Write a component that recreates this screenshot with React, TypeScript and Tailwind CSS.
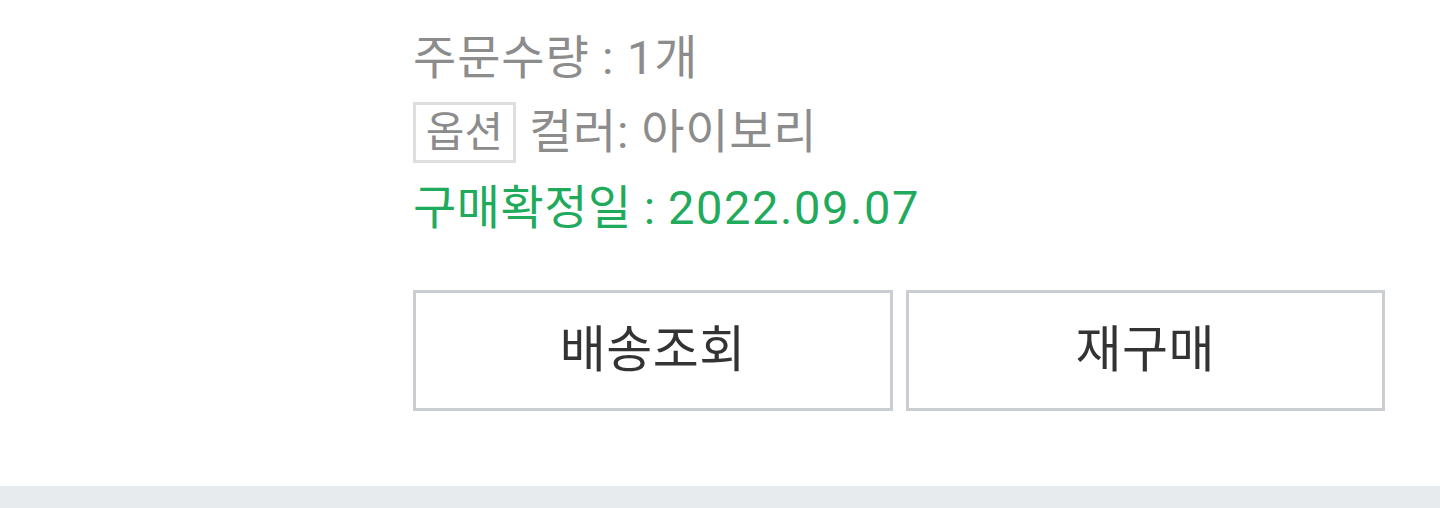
import React from 'react';

const font = { fontFamily: 'Roboto, "Noto Sans CJK KR", sans-serif' };

const OrderItem: React.FC = () => {
  return (
    <div className="w-[1440px] bg-white" style={font}>
      <div className="pl-[413px] pr-[55px] pt-[20px] pb-[75px]">
        <p className="text-[47px] leading-[75px] text-[#8c8c8c] tracking-[0.9px]">주문수량 : 1개</p>
        <div className="flex items-center h-[75px] text-[47px] text-[#8c8c8c]">
          <span className="flex items-center justify-center w-[103px] h-[61px] border-[3px] border-[#dedede] text-[42px] mr-[13px]">
            옵션
          </span>
          <span className="tracking-[0.7px]">컬러: 아이보리</span>
        </div>
        <p className="text-[47px] leading-[75px] text-[#1faa5c] tracking-[0.5px]">
          구매확정일 : <span className="tracking-[1.6px]">2022.09.07</span>
        </p>
        <div className="flex gap-[13px] mt-[45px]">
          <button className="flex-1 h-[121px] border-[3px] border-[#cacdd2] bg-white text-[50px] text-[#333333] tracking-[0.5px]">
            배송조회
          </button>
          <button className="flex-1 h-[121px] border-[3px] border-[#cacdd2] bg-white text-[50px] text-[#333333] tracking-[0.5px]">
            재구매
          </button>
        </div>
      </div>
      <div className="h-[22px] bg-[#e8ebee]" />
    </div>
  );
};

export default function App() {
  return <OrderItem />;
}
